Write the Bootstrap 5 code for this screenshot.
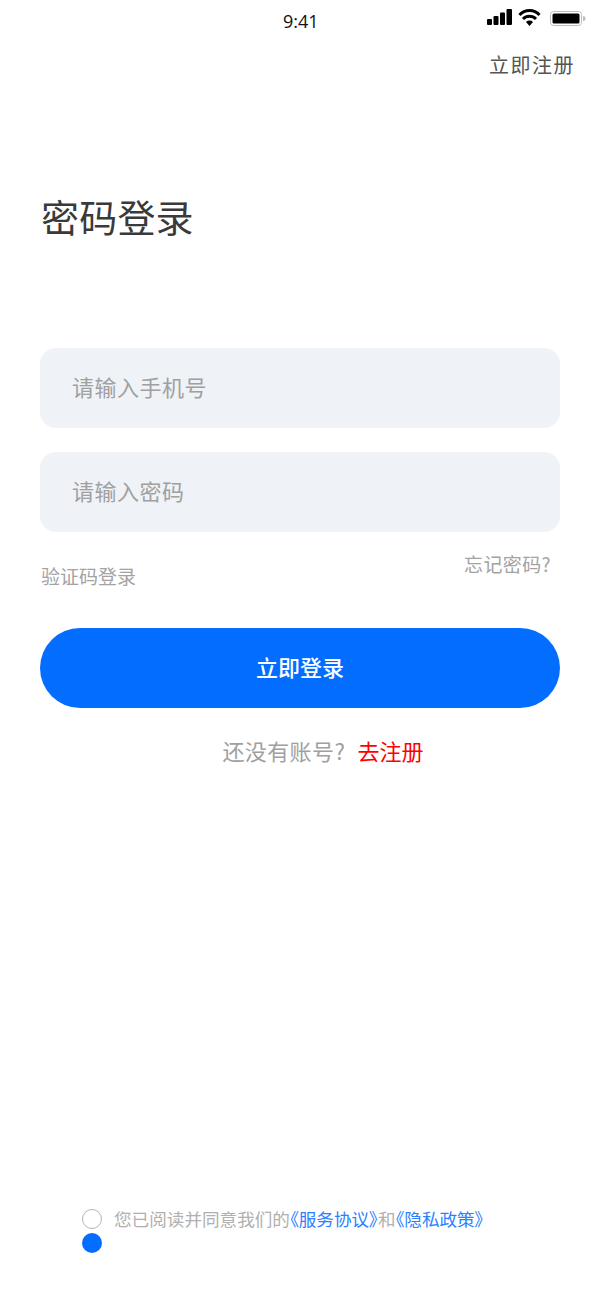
<!DOCTYPE html>
<html lang="zh-CN">
<head>
  <meta charset="UTF-8">
  <meta name="viewport" content="width=device-width, initial-scale=1.0">
  <title>密码登录</title>
  <link href="https://cdn.jsdelivr.net/npm/bootstrap@5.3.2/dist/css/bootstrap.min.css" rel="stylesheet">
  <style>
    html, body { height: 100%; }
    body {
      background: #fff;
      font-family: "Noto Sans CJK SC", "Liberation Sans", sans-serif;
    }
    .login-page { height: 1299px; overflow: hidden; }
    .status-bar { height: 44px; }
    .status-time { left: 283px; top: 9px; font: 18px/24px "Open Sans", sans-serif; color: #111; }
    .status-icons { left: 487px; top: 0; }
    .top-link { padding: 5px 25px 0 0; font-size: 20px; line-height: 32px; color: #555; letter-spacing: 1.5px; }
    .page-title { margin: 105px 0 0 41px; font-size: 38px; line-height: 60px; font-weight: 400; color: #3a3a3a; letter-spacing: 0.2px; }
    .form-area { margin: 102px 40px 0; }
    .field {
      height: 80px;
      padding: 0 32px 4px;
      border: 0;
      border-radius: 16px;
      background: #eff2f7;
      font-size: 22px;
      letter-spacing: 0.5px;
      color: #999;
    }
    .field::placeholder { color: #a0a0a0; }
    .field:focus { background: #eff2f7; box-shadow: none; }
    .sub-links { height: 96px; font-size: 19px; color: #a3a3a3; }
    .sub-left { margin: 26px 0 0 1px; line-height: 36px; }
    .sub-right { margin-top: 14px; margin-right: 9px; line-height: 36px; letter-spacing: 0.4px; }
    .login-btn {
      height: 80px;
      padding-bottom: 10px;
      border: 0;
      border-radius: 40px;
      background: #026dff;
      font-size: 22px;
      font-weight: 500;
      color: #fff;
    }
    .login-btn:hover { background: #026dff; color: #fff; }
    .register-line { margin-top: 24px; padding-left: 46px; font-size: 22px; line-height: 36px; color: #a0a0a0; letter-spacing: 0.4px; }
    .register-line a { color: #fe0000; text-decoration: none; margin-left: 7px; letter-spacing: 0; }
    .agree-row { bottom: 46px; left: 82px; font-size: 17.6px; line-height: 24px; color: #b0b0b0; }
    .agree-text { margin-top: -2px; font-feature-settings: "palt"; }
    .agree-row a { color: #2c7fff; text-decoration: none; }
    .radio-off, .radio-on { width: 20px; height: 20px; border-radius: 50%; }
    .radio-off { border: 1px solid #b5b5b5; background: #fff; }
    .radio-on { background: #026dff; }
  </style>
</head>
<body>
  <div class="login-page position-relative">
    <!-- Status bar -->
    <div class="status-bar position-relative">
      <span class="status-time position-absolute">9:41</span>
      <svg class="status-icons position-absolute" width="100" height="32" viewBox="0 0 100 32">
        <rect x="0" y="19" width="5" height="6" rx="1" fill="#000"/>
        <rect x="6.5" y="16" width="5" height="9" rx="1" fill="#000"/>
        <rect x="13" y="12.5" width="5" height="12.5" rx="1" fill="#000"/>
        <rect x="19.5" y="9" width="5.5" height="16" rx="1" fill="#000"/>
        <path d="M32.5 15 A13.5 13.5 0 0 1 52.5 15" fill="none" stroke="#000" stroke-width="3"/>
        <path d="M36 19 A9 9 0 0 1 49 19" fill="none" stroke="#000" stroke-width="3"/>
        <path d="M39 22 L42.5 26 L46 22 A5 5 0 0 0 39 22 Z" fill="#000"/>
        <rect x="63.5" y="11.5" width="31" height="14" rx="3" fill="none" stroke="#bdbdbd"/>
        <rect x="65.5" y="13.5" width="27" height="10" rx="1.5" fill="#000"/>
        <path d="M96 16 a2.5 2.5 0 0 1 0 5 Z" fill="#bdbdbd"/>
      </svg>
    </div>

    <div class="top-link text-end">立即注册</div>
    <h1 class="page-title">密码登录</h1>

    <form class="form-area">
      <input type="text" class="form-control field mb-4" placeholder="请输入手机号">
      <input type="password" class="form-control field" placeholder="请输入密码">
      <div class="sub-links d-flex justify-content-between align-items-start">
        <span class="sub-left">验证码登录</span>
        <span class="sub-right">忘记密码?</span>
      </div>
      <button type="button" class="btn login-btn w-100">立即登录</button>
      <div class="register-line text-center">还没有账号? <a href="#">去注册</a></div>
    </form>

    <!-- Agreement -->
    <div class="agree-row position-absolute d-flex gap-2">
      <div class="d-flex flex-column gap-1">
        <span class="radio-off"></span>
        <span class="radio-on"></span>
      </div>
      <div class="agree-text ms-1">您已阅读并同意我们的<a href="#">《服务协议》</a>和<a href="#">《隐私政策》</a></div>
    </div>
  </div>
  <script src="https://cdn.jsdelivr.net/npm/bootstrap@5.3.2/dist/js/bootstrap.bundle.min.js"></script>
</body>
</html>
